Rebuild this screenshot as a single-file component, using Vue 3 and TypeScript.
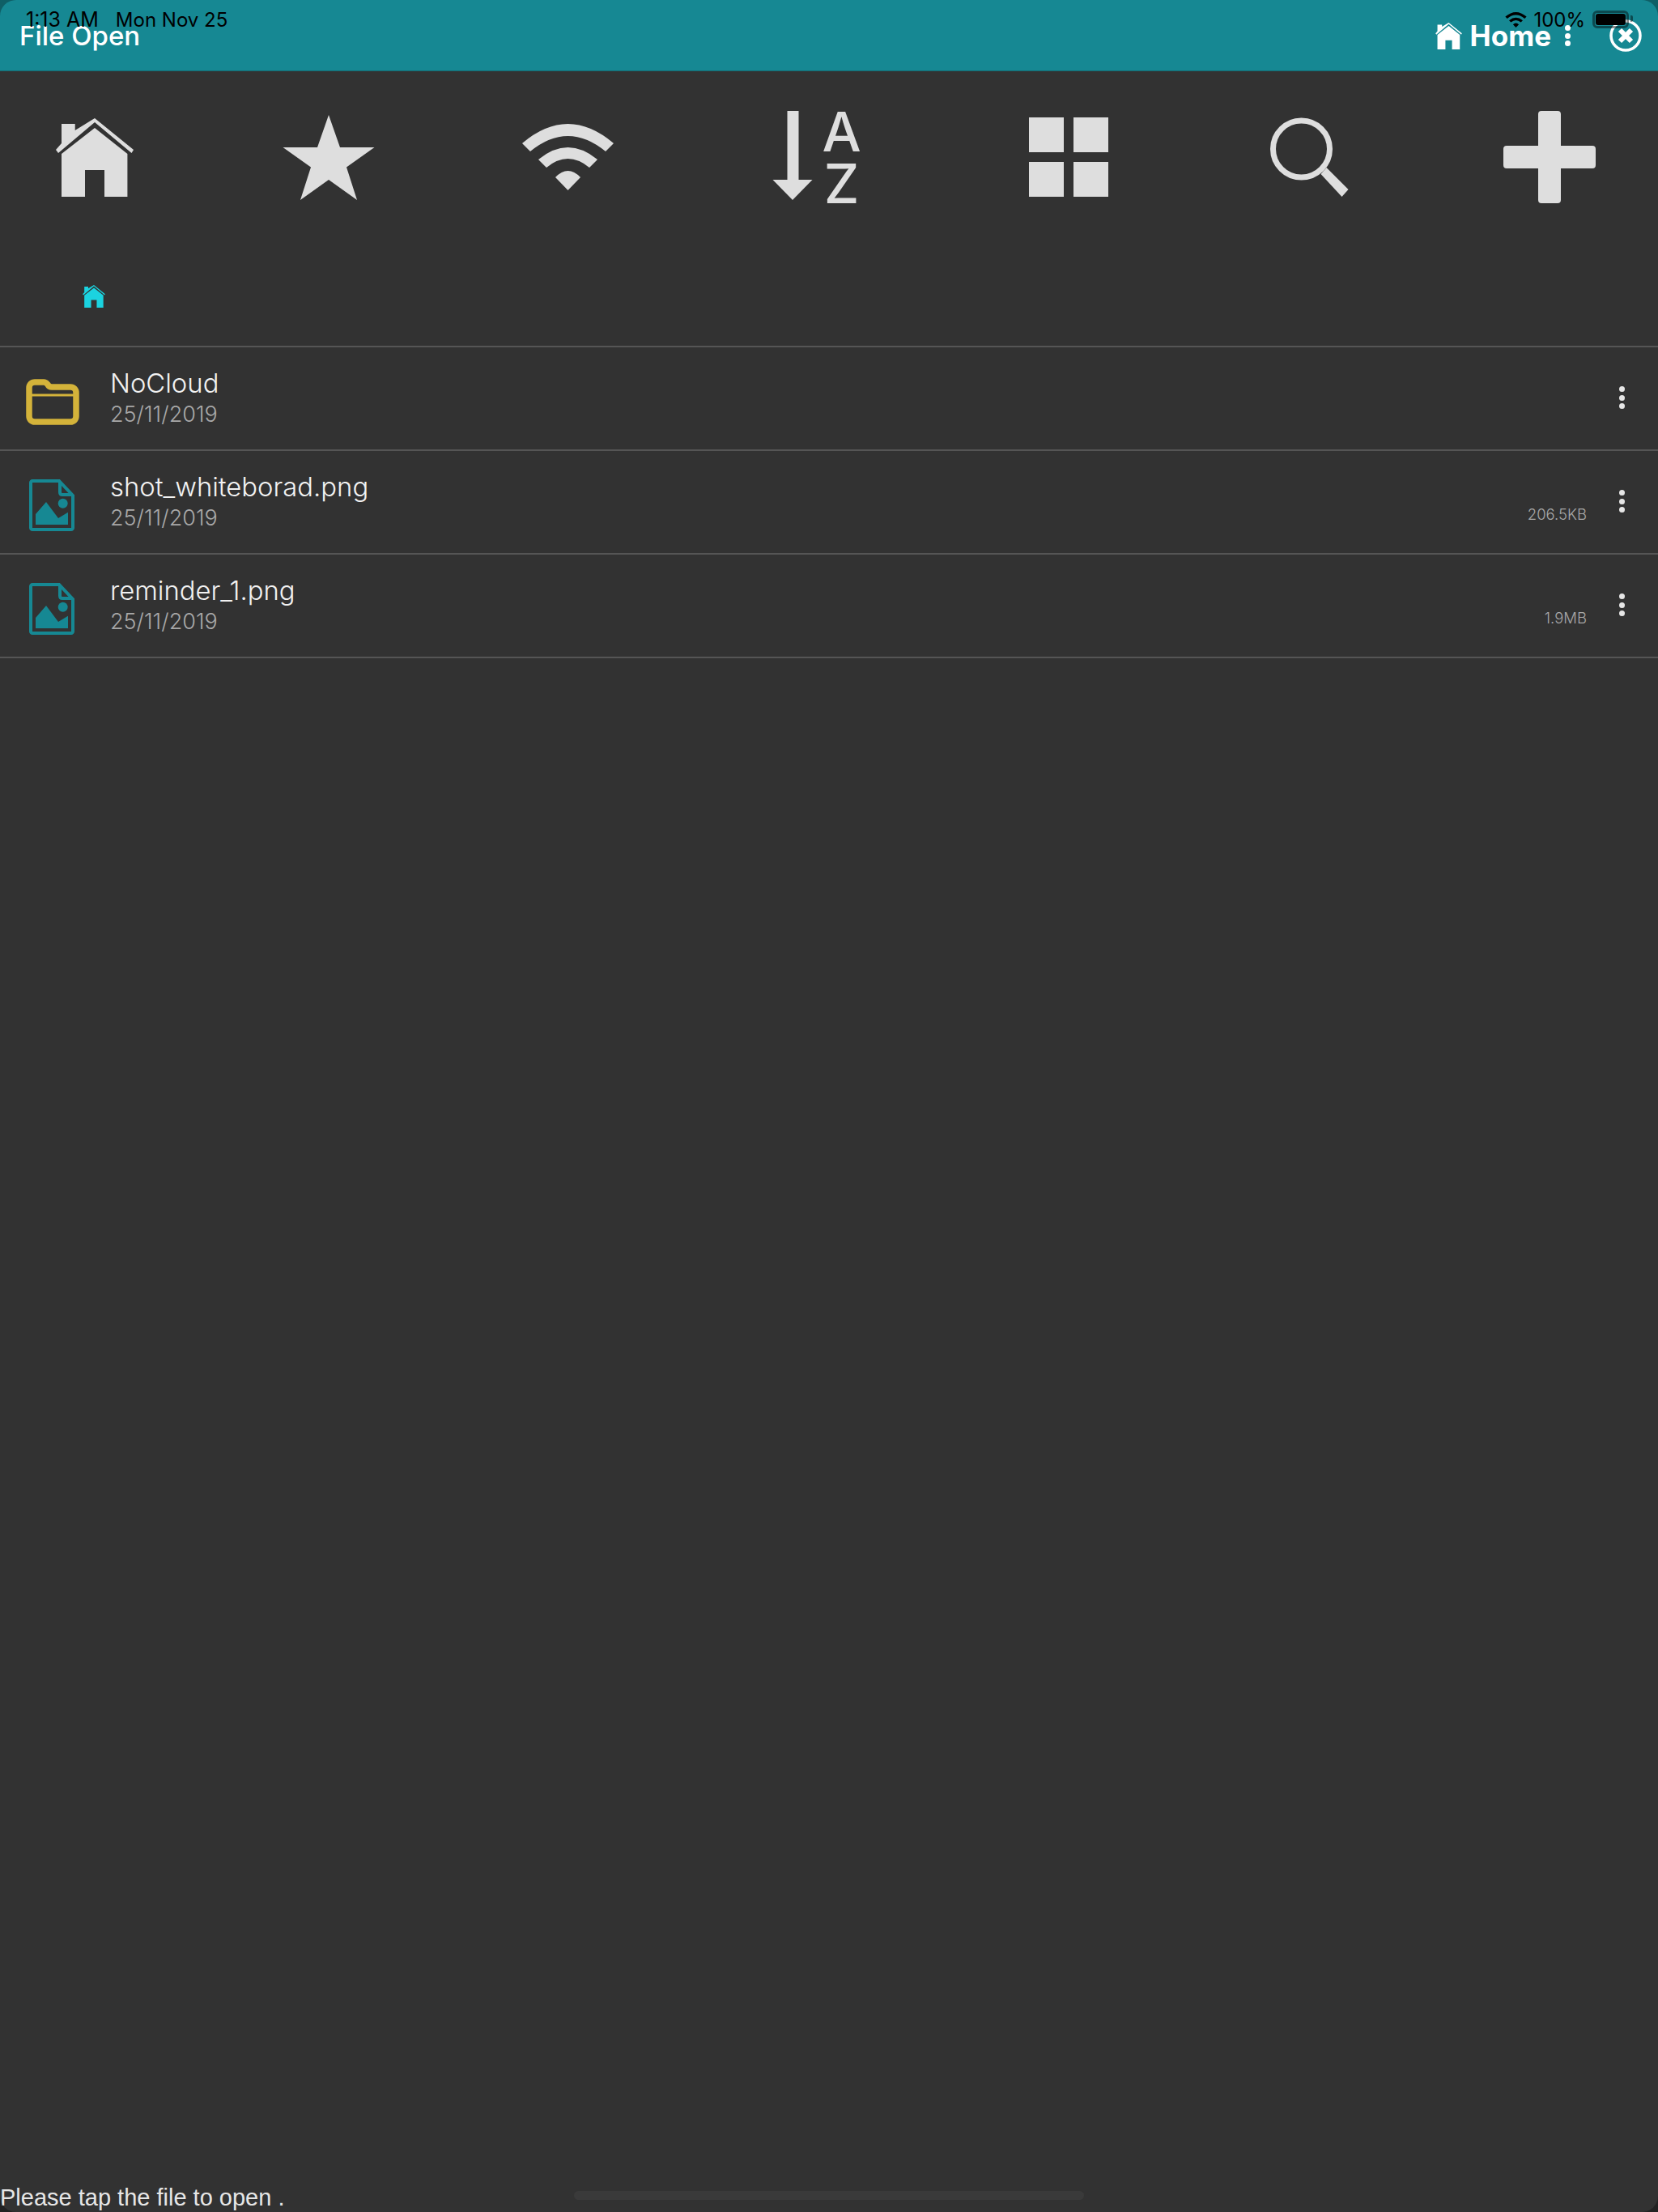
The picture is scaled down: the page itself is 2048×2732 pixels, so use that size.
<script setup lang="ts">
interface FileRow {
  name: string
  date: string
  size?: string
  kind: 'folder' | 'image'
}

const files: FileRow[] = [
  { name: 'NoCloud', date: '25/11/2019', kind: 'folder' },
  { name: 'shot_whiteborad.png', date: '25/11/2019', size: '206.5KB', kind: 'image' },
  { name: 'reminder_1.png', date: '25/11/2019', size: '1.9MB', kind: 'image' },
]

const homePath =
  'M76 190 117 158 157.400 190V243H129V210H105V243H76ZM69 185 76 177V153H92.700V161L117 146 165 185 162.500 189 117 151 72 189Z'

const wifiPaths = [
  'M645 177Q701.500 129 758 177L748 187Q701.500 149 655 187Z',
  'M665 197Q701.500 167 738 197L728 207Q701.500 185 675 207Z',
  'M686 219Q701.500 203 717 219L701.500 235Z',
]
</script>

<template>
  <div class="screen">
    <div class="status-bar">
      <span class="status-time">1:13 AM</span>
      <span class="status-date">Mon Nov 25</span>
      <svg class="status-wifi" viewBox="645 153 113 82">
        <path v-for="d in wifiPaths" :key="d" :d="d" />
      </svg>
      <span class="status-pct">100%</span>
      <span class="status-battery"><i></i></span>
    </div>

    <header class="title-bar">
      <span class="title">File Open</span>
      <div class="title-right">
        <svg class="title-home" viewBox="69 146 96 97"><path :d="homePath" /></svg>
        <span class="title-home-label">Home</span>
        <span class="title-dots"><i></i><i></i><i></i></span>
        <svg class="title-close" viewBox="0 0 40 40">
          <circle cx="20" cy="20" r="18" />
          <path d="M13 13 27 27M27 13 13 27" />
        </svg>
      </div>
    </header>

    <nav class="toolbar">
      <svg viewBox="37 130 160 130"><path :d="homePath" /></svg>
      <svg viewBox="336.500 130 160 130">
        <polygon points="405.500,142 419.500,182 462,182 427.500,206.500 440.500,247 405.500,222 370.500,247 383.500,206.500 349,182 391.500,182" />
      </svg>
      <svg viewBox="636 130 160 130">
        <path v-for="d in wifiPaths" :key="d" :d="d" />
      </svg>
      <svg viewBox="935.500 130 160 130">
        <path d="M972 137H986V222H1003L978.500 247 954 222H972Z" />
        <text x="1039" y="187" text-anchor="middle" class="sort-letter">A</text>
        <text x="1039" y="251" text-anchor="middle" class="sort-letter">Z</text>
      </svg>
      <svg viewBox="1235 130 160 130">
        <rect x="1271" y="145" width="43" height="43" />
        <rect x="1326" y="145" width="43" height="43" />
        <rect x="1271" y="200" width="43" height="43" />
        <rect x="1326" y="200" width="43" height="43" />
      </svg>
      <svg viewBox="1534.500 130 160 130">
        <circle cx="1607" cy="184" r="35" class="lens" />
        <path d="M1631 215 1638 207 1665 234 1657 243Z" />
      </svg>
      <svg viewBox="1834 130 160 130">
        <path d="M1904 137H1924Q1928 137 1928 141V180H1967Q1971 180 1971 184V204Q1971 208 1967 208H1928V247Q1928 251 1924 251H1904Q1900 251 1900 247V208H1861Q1857 208 1857 204V184Q1857 180 1861 180H1900V141Q1900 137 1904 137Z" />
      </svg>
    </nav>

    <div class="crumbs">
      <svg viewBox="69 146 96 97"><path :d="homePath" /></svg>
    </div>

    <ul class="file-list">
      <li v-for="file in files" :key="file.name" class="file-row">
        <svg v-if="file.kind === 'folder'" class="folder-icon" viewBox="0 0 66 57">
          <path class="folder-line" d="M11 4H22C25 4 26 6 27 7 28 9 29 10 32 10H55C59 10 62 13 62 17V46C62 50 59 53 55 53H11C7 53 4 50 4 46V11C4 7 7 4 11 4Z" />
          <path class="folder-rule" d="M4 20H62" />
        </svg>
        <svg v-else class="image-icon" viewBox="0 0 56 64">
          <path class="image-line" d="M4 2H37L54 20V60C54 61 53 62 52 62H4C3 62 2 61 2 60V4C2 3 3 2 4 2ZM38 2V16C38 18 39 19 41 19H54" />
          <circle class="image-fill" cx="41.700" cy="29.700" r="6" />
          <path class="image-fill" d="M8 56V43L21 28 36 48 48 40.700V56Z" />
        </svg>
        <div class="file-text">
          <div class="file-name">{{ file.name }}</div>
          <div class="file-date">{{ file.date }}</div>
        </div>
        <div v-if="file.size" class="file-size">{{ file.size }}</div>
        <span class="row-dots"><i></i><i></i><i></i></span>
      </li>
    </ul>

    <footer class="hint">Please tap the file to open .</footer>
    <div class="home-indicator"></div>
    <div class="corner-frame"></div>
  </div>
</template>

<style scoped>
.screen {
  position: relative;
  width: 2048px;
  height: 2732px;
  display: flex;
  flex-direction: column;
  overflow: hidden;
  background: #323232;
  font-family: Inter, "Noto Sans", sans-serif;
}

.corner-frame {
  position: absolute;
  inset: 0;
  border-radius: 20px;
  box-shadow: 0 0 0 30px rgba(0, 0, 0, 0.3);
  pointer-events: none;
}

.status-bar {
  position: absolute;
  top: 9px;
  left: 32px;
  right: 36px;
  height: 30px;
  display: flex;
  align-items: center;
  font-size: 25px;
  color: #000;
  z-index: 2;
}

.status-date {
  margin-left: 21px;
  font-size: 24px;
}

.status-wifi {
  margin-left: auto;
  width: 27px;
  height: 19px;
  fill: #000;
}

.status-pct {
  margin-left: 8px;
  margin-right: 9px;
  font-size: 24px;
}

.status-battery {
  position: relative;
  width: 45px;
  height: 22px;
  padding: 1px;
  box-sizing: border-box;
  border: 3px solid rgba(0, 0, 0, 0.45);
  border-radius: 6px;
}

.status-battery::after {
  content: "";
  position: absolute;
  top: 3px;
  right: -8px;
  width: 3px;
  height: 8px;
  border-radius: 0 2px 2px 0;
  background: rgba(0, 0, 0, 0.45);
}

.status-battery i {
  display: block;
  height: 100%;
  background: #000;
  border-radius: 3px;
}

.title-bar {
  height: 88px;
  flex: none;
  display: flex;
  align-items: flex-start;
  justify-content: space-between;
  padding: 23px 20px 0 24px;
  box-sizing: border-box;
  background: #168893;
  border-bottom: 1px solid #126a72;
  color: #fff;
}

.title {
  font-size: 33px;
  font-weight: 500;
  line-height: 42px;
}

.title-right {
  display: flex;
  align-items: center;
  height: 42px;
}

.title-home {
  width: 33px;
  height: 33px;
  fill: #fff;
  margin-top: 1px;
}

.title-home-label {
  margin-left: 10px;
  font-size: 35px;
  font-weight: 700;
}

.title-dots {
  display: flex;
  flex-direction: column;
  gap: 2.500px;
  margin-left: 17px;
}

.title-dots i {
  width: 7px;
  height: 7px;
  border-radius: 50%;
  background: #fff;
}

.title-close {
  width: 40px;
  height: 40px;
  margin-left: 48px;
  fill: none;
  stroke: #fff;
}

.title-close circle {
  stroke-width: 3.500;
}

.title-close path {
  stroke-width: 6;
}

.toolbar {
  flex: none;
  display: flex;
  gap: 139.500px;
  padding: 42px 0 0 37px;
}

.toolbar svg {
  flex: none;
  width: 160px;
  height: 130px;
  fill: #dedede;
  overflow: visible;
}

.sort-letter {
  font-family: Inter, sans-serif;
  font-size: 68px;
  font-weight: 500;
}

.lens {
  fill: none;
  stroke: #dedede;
  stroke-width: 7;
}

.crumbs {
  flex: none;
  height: 169px;
  box-sizing: border-box;
  padding: 92px 0 0 102px;
  border-bottom: 2px solid #555;
}

.crumbs svg {
  display: block;
  width: 28px;
  height: 28px;
  fill: #1bd3e0;
}

.file-list {
  margin: 0;
  padding: 0;
  list-style: none;
}

.file-row {
  height: 128px;
  box-sizing: border-box;
  display: flex;
  align-items: flex-start;
  border-bottom: 2px solid #555;
}

.folder-icon {
  flex: none;
  width: 66px;
  height: 57px;
  margin: 39px 38px 0 32px;
}

.folder-line {
  fill: none;
  stroke: #d4b33a;
  stroke-width: 7.500;
}

.folder-rule {
  fill: none;
  stroke: #d4b33a;
  stroke-width: 3;
}

.image-icon {
  flex: none;
  width: 56px;
  height: 64px;
  margin: 35px 44px 0 36px;
}

.image-line {
  fill: none;
  stroke: #168893;
  stroke-width: 4;
}

.image-fill {
  fill: #168893;
}

.file-text {
  padding-top: 23px;
}

.file-name {
  font-size: 32.800px;
  line-height: 42px;
  font-weight: 300;
  color: #f2f2f2;
}

.file-date {
  margin-top: 1px;
  font-size: 27px;
  line-height: 33px;
  font-weight: 300;
  color: #a8a8a8;
}

.file-size {
  margin-left: auto;
  padding-top: 66px;
  font-size: 18.500px;
  line-height: 24px;
  font-weight: 300;
  color: #a8a8a8;
}

.row-dots {
  flex: none;
  display: flex;
  flex-direction: column;
  gap: 3.700px;
  margin: 48px 41px 0 40px;
}

.file-text + .row-dots {
  margin-left: auto;
}

.row-dots i {
  width: 7px;
  height: 7px;
  border-radius: 50%;
  background: #e6e6e6;
}

.hint {
  margin-top: auto;
  height: 33px;
  font-family: "Liberation Sans", Arial, sans-serif;
  font-size: 29px;
  line-height: 30px;
  color: #e6e6e6;
}

.home-indicator {
  position: absolute;
  left: 709px;
  bottom: 15px;
  width: 630px;
  height: 11px;
  border-radius: 6px;
  background: #3a3a3a;
}
</style>
